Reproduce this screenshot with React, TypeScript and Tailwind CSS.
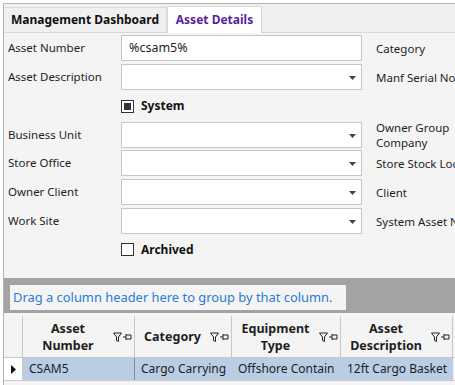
import React from "react";

const font = { fontFamily: '"Noto Sans", "Open Sans", sans-serif' };

function Arrow() {
  return (
    <svg width="7" height="4" viewBox="0 0 7 4" className="absolute right-[5px] top-[11px]">
      <path d="M0 0h7L3.5 4z" fill="#444" />
    </svg>
  );
}

function Field({ dropdown, value }: { dropdown?: boolean; value?: string }) {
  return (
    <div className="relative shrink-0 w-[241px] h-[26px] bg-white border border-[#c6c6c6] flex items-center pl-[7px] text-[12.5px] text-[#1e1e1e]">
      {value}
      {dropdown && <Arrow />}
    </div>
  );
}

function Row({ label, right, dropdown, value, className }: { label: string; right: React.ReactNode; dropdown?: boolean; value?: string; className?: string }) {
  return (
    <div className={"flex items-center h-[26px] " + (className ?? "")}>
      <div className="w-[117px] shrink-0 pl-[4px] text-[11.5px] text-[#1e1e1e]">{label}</div>
      <Field dropdown={dropdown} value={value} />
      <div className="h-[26px] flex items-center pl-[14px] text-[11.5px] text-[#1e1e1e] whitespace-nowrap leading-[15px]">
        <div>{right}</div>
      </div>
    </div>
  );
}

function FilterPin() {
  return (
    <svg width="19" height="10" viewBox="0 0 19 10" className="shrink-0">
      <path d="M0.5 1h8L5.5 5v4.5l-2-1V5z" fill="none" stroke="#222" strokeWidth="1" />
      <path d="M10 5h3M13 2v6M13 3h5v4h-5" fill="none" stroke="#222" strokeWidth="1" />
    </svg>
  );
}

function Header({ children, w }: { children: React.ReactNode; w: string }) {
  return (
    <div className={"flex items-center shrink-0 border-r border-[#c8c8c8] pr-[2px] " + w}>
      <div className="flex-1 text-center font-bold text-[12.5px] leading-[17px] text-[#1e1e1e] whitespace-nowrap">{children}</div>
      <FilterPin />
    </div>
  );
}

export default function App() {
  return (
    <div className="w-[455px] h-[385px] overflow-hidden bg-white pl-[3px] pt-[3px]" style={font}>
      <div className="h-full border-l border-t border-[#b4b4b4] bg-[#f0f0f0] flex flex-col">
        {/* tabs */}
        <div className="h-[29px] flex items-end border-b border-[#d9d9d9] shrink-0">
          <div className="h-[25px] w-[163px] shrink-0 border-r border-t border-[#d9d9d9] flex items-center justify-center whitespace-nowrap font-bold text-[12px] text-[#111]">
            Management Dashboard
          </div>
          <div className="h-[27px] w-[95px] shrink-0 -mb-px bg-white border border-b-0 border-[#d9d9d9] flex items-center justify-center whitespace-nowrap font-bold text-[12px] text-[#5b1f9a]">
            Asset Details
          </div>
        </div>
        {/* form */}
        <div className="bg-[#f4f4f4] h-[245px] shrink-0 pt-[2px]">
          <Row label="Asset Number" right="Category" value="%csam5%" />
          <Row className="mt-[3px]" label="Asset Description" right="Manf Serial No" dropdown />
          <div className="h-[32px] flex items-center pl-[117px]">
            <div className="w-[13px] h-[13px] border border-[#333] bg-white flex items-center justify-center">
              <div className="w-[7px] h-[7px] bg-[#333]" />
            </div>
            <span className="ml-[7px] font-bold text-[12px] text-[#111]">System</span>
          </div>
          <Row label="Business Unit" right={<>Owner Group<br />Company</>} dropdown />
          <Row className="mt-[2px]" label="Store Office" right="Store Stock Loc" dropdown />
          <Row className="mt-[3px]" label="Owner Client" right="Client" dropdown />
          <Row className="mt-[3px]" label="Work Site" right="System Asset N" dropdown />
          <div className="h-[31px] flex items-center pl-[117px]">
            <div className="w-[13px] h-[13px] border border-[#333] bg-white" />
            <span className="ml-[7px] font-bold text-[12px] text-[#111]">Archived</span>
          </div>
        </div>
        {/* group panel */}
        <div className="bg-[#a3a3a3] h-[35px] shrink-0 pl-[6px] pt-[7px]">
          <div className="w-[336px] h-[25px] bg-[#f4f4f4] flex items-center pl-[3px] text-[12.9px] text-[#2b7bd6] whitespace-nowrap">
            Drag a column header here to group by that column.
          </div>
        </div>
        {/* grid */}
        <div className="flex-1 bg-[#f4f4f4] pt-[3px]">
          <div className="flex h-[42px] border-b border-[#c8c8c8] bg-[#f4f4f4]">
            <div className="w-[19px] shrink-0 border-r border-[#c8c8c8]" />
            <Header w="w-[112px]">Asset<br />Number</Header>
            <Header w="w-[97px]">Category</Header>
            <Header w="w-[109px]">Equipment<br />Type</Header>
            <Header w="w-[112px]">Asset<br />Description</Header>
          </div>
          <div className="flex h-[23px] border-b border-[#c8c8c8] text-[12px] text-[#1e1e1e] whitespace-nowrap">
            <div className="w-[19px] shrink-0 border-r border-[#c8c8c8] flex items-center justify-center bg-white">
              <svg width="5" height="9" viewBox="0 0 5 9"><path d="M0 0l5 4.5L0 9z" fill="#111" /></svg>
            </div>
            <div className="w-[112px] shrink-0 bg-[#b9cde5] border-r border-[#8a8a8a] flex items-center pl-[6px]">CSAM5</div>
            <div className="w-[97px] shrink-0 bg-[#b9cde5] flex items-center pl-[6px]">Cargo Carrying</div>
            <div className="w-[109px] shrink-0 bg-[#b9cde5] flex items-center pl-[6px]">Offshore Contain</div>
            <div className="w-[112px] shrink-0 bg-[#b9cde5] flex items-center pl-[6px]">12ft Cargo Basket</div>
          </div>
        </div>
      </div>
    </div>
  );
}
